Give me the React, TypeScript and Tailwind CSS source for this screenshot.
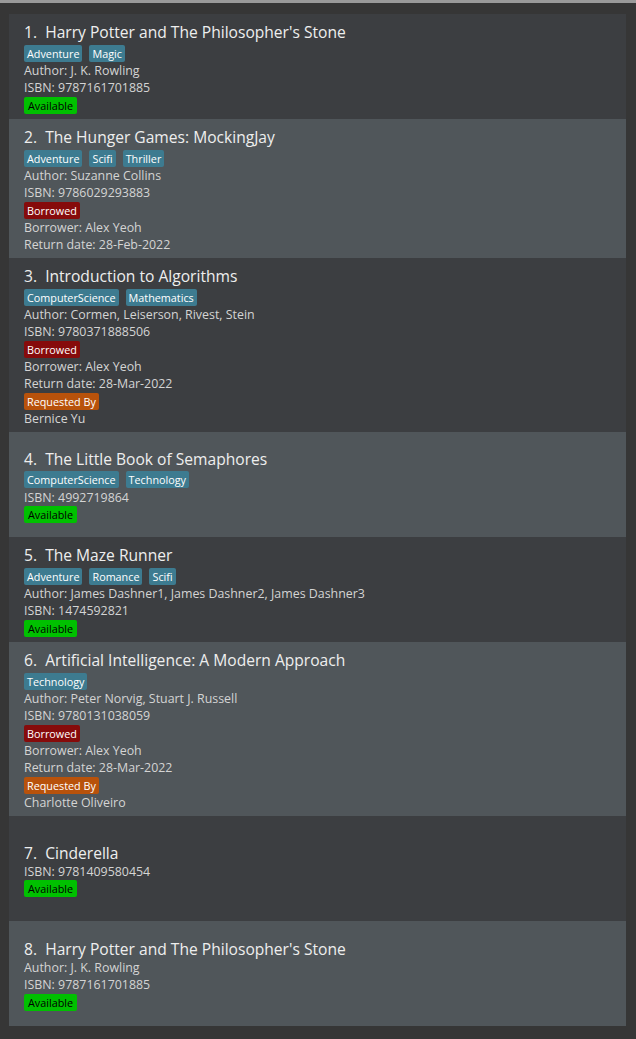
import React from "react";

type Book = {
  n: number;
  title: string;
  tags?: string[];
  author?: string;
  isbn: string;
  status: "Available" | "Borrowed";
  borrower?: string;
  returnDate?: string;
  requestedBy?: string;
};

const books: Book[] = [
  { n: 1, title: "Harry Potter and The Philosopher's Stone", tags: ["Adventure", "Magic"], author: "J. K. Rowling", isbn: "9787161701885", status: "Available" },
  { n: 2, title: "The Hunger Games: MockingJay", tags: ["Adventure", "Scifi", "Thriller"], author: "Suzanne Collins", isbn: "9786029293883", status: "Borrowed", borrower: "Alex Yeoh", returnDate: "28-Feb-2022" },
  { n: 3, title: "Introduction to Algorithms", tags: ["ComputerScience", "Mathematics"], author: "Cormen, Leiserson, Rivest, Stein", isbn: "9780371888506", status: "Borrowed", borrower: "Alex Yeoh", returnDate: "28-Mar-2022", requestedBy: "Bernice Yu" },
  { n: 4, title: "The Little Book of Semaphores", tags: ["ComputerScience", "Technology"], isbn: "4992719864", status: "Available" },
  { n: 5, title: "The Maze Runner", tags: ["Adventure", "Romance", "Scifi"], author: "James Dashner1, James Dashner2, James Dashner3", isbn: "1474592821", status: "Available" },
  { n: 6, title: "Artificial Intelligence: A Modern Approach", tags: ["Technology"], author: "Peter Norvig, Stuart J. Russell", isbn: "9780131038059", status: "Borrowed", borrower: "Alex Yeoh", returnDate: "28-Mar-2022", requestedBy: "Charlotte Oliveiro" },
  { n: 7, title: "Cinderella", isbn: "9781409580454", status: "Available" },
  { n: 8, title: "Harry Potter and The Philosopher's Stone", author: "J. K. Rowling", isbn: "9787161701885", status: "Available" },
];

function Line({ children }: { children: React.ReactNode }) {
  return <div className="h-[17px] leading-[17px] text-[12.4px] text-[#d4d4d4] whitespace-nowrap">{children}</div>;
}

function Badge({ children, cls }: { children: React.ReactNode; cls: string }) {
  return (
    <div className="h-[18px] flex items-center">
      <span className={`h-[17px] leading-[17px] rounded-[2px] text-[10.8px] ${cls}`}>{children}</span>
    </div>
  );
}

function Row({ b, light }: { b: Book; light: boolean }) {
  return (
    <div className={`min-h-[105px] pt-[8px] pb-[5px] pl-[15px] flex flex-col justify-center ${light ? "bg-[#50565a]" : "bg-[#3c3e41]"}`}>
      <div className="h-[20px] leading-[20px] text-[15.6px] text-[#eeeeee] whitespace-pre">
        {b.n}.{"  "}{b.title}
      </div>
      {b.tags && (
        <div className="mt-[2px] h-[18px] flex items-center gap-[7px]">
          {b.tags.map((t) => (
            <span key={t} className="h-[17px] leading-[17px] px-[3px] rounded-[2px] text-[10.8px] bg-[#3d7b90] text-white">{t}</span>
          ))}
        </div>
      )}
      {b.author && <Line>Author: {b.author}</Line>}
      <Line>ISBN: {b.isbn}</Line>
      {b.status === "Available" ? (
        <Badge cls="px-[4px] bg-[#00c000] text-black">Available</Badge>
      ) : (
        <Badge cls="px-[3px] bg-[#860b0b] text-white">Borrowed</Badge>
      )}
      {b.borrower && <Line>Borrower: {b.borrower}</Line>}
      {b.returnDate && <Line>Return date: {b.returnDate}</Line>}
      {b.requestedBy && (
        <>
          <Badge cls="px-[3px] bg-[#b8520b] text-white">Requested By</Badge>
          <Line>{b.requestedBy}</Line>
        </>
      )}
    </div>
  );
}

export default function App() {
  return (
    <div className="w-[636px] h-[1039px] bg-[#363636] flex flex-col" style={{ fontFamily: '"Open Sans", "Noto Sans", sans-serif' }}>
      <div className="h-[3px] bg-[#9a9a9a]" />
      <div className="mt-[11px] ml-[9px] w-[617px] flex flex-col">
        {books.map((b, i) => (
          <Row key={i} b={b} light={i % 2 === 1} />
        ))}
      </div>
    </div>
  );
}
